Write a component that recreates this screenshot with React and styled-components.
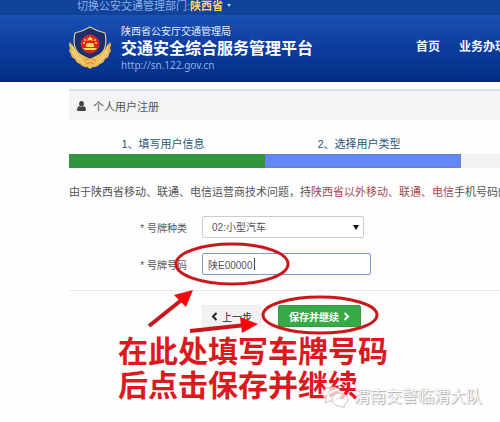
import React from "react";
import styled, { createGlobalStyle } from "styled-components";

const Global = createGlobalStyle`
  *, *::before, *::after { box-sizing: border-box; }
  body {
    margin: 0;
    background: #fefefe;
    color: #555;
    font-family: "Liberation Sans", "Noto Sans CJK SC", sans-serif;
    font-size: 11px;
    overflow: hidden;
  }
  button, input, select { font: inherit; }
`;

const Page = styled.div`
  position: relative;
  overflow: hidden;
  white-space: nowrap;
  min-height: 100vh;
`;

const TopBar = styled.div`
  display: flex;
  align-items: center;
  height: 15px;
  padding: 0 0 4px 77px;
  background: #10429a;
  color: #8fb0e6;
  font-size: 11px;
  line-height: 12px;
`;

const RegionLink = styled.a`
  display: flex;
  align-items: center;
  gap: 4px;
  color: #fbd66c;
  font-size: 11px;
  font-weight: bold;
  text-decoration: none;
  &::after {
    content: "";
    border: 2px solid transparent;
    border-top: 3px solid #b9d2f8;
    border-bottom: 0;
  }
`;

const Header = styled.header`
  display: flex;
  align-items: flex-start;
  height: 67px;
  padding: 10px 0 0 68px;
  background: linear-gradient(#1b51b4, #0c3c9e 50%, #032f86);
  border-bottom: 2px solid #02266f;
  color: #fff;
`;

const Emblem = styled.svg`
  flex: none;
  width: 44px;
  height: 46px;
`;

const Brand = styled.div`
  flex: none;
  display: flex;
  flex-direction: column;
  width: 304px;
  padding-left: 9px;
`;

const Department = styled.span`
  color: #e1edfc;
  font-size: 10px;
  line-height: 14px;
`;

const SiteName = styled.h1`
  margin: 0;
  font-size: 16px;
  line-height: 20px;
  font-weight: bold;
`;

const SiteUrl = styled.span`
  color: #8cb0e8;
  font-family: "Noto Sans", "Open Sans", sans-serif;
  font-size: 10px;
  line-height: 12px;
`;

const Nav = styled.nav`
  display: flex;
  gap: 19px;
  padding-top: 13px;
`;

const NavLink = styled.a`
  color: #f2f7ff;
  font-size: 12px;
  line-height: 18px;
  font-weight: bold;
  text-decoration: none;
`;

const Main = styled.main`
  margin-left: 69px;
  padding-top: 7px;
`;

const PanelTitle = styled.h2`
  display: flex;
  align-items: center;
  gap: 7px;
  height: 31px;
  margin: 0;
  padding-left: 8px;
  background: #f4f3f6;
  border-top: 2px solid #e6dbea;
  font-size: 11px;
  font-weight: normal;
`;

const UserIcon = styled.svg`
  width: 9px;
  height: 10px;
  fill: #444;
`;

const Steps = styled.ol`
  display: flex;
  margin: 14px 0 0;
  padding: 0;
  list-style: none;
  color: #2c5578;
  font-size: 11px;
`;

const Step = styled.li`
  flex: none;
  width: ${(p) => (p.$rest ? "auto" : "196px")};
  flex-grow: ${(p) => (p.$rest ? 1 : 0)};
  text-align: center;
  line-height: 20px;
  padding-right: 8px;
`;

const Progress = styled.div`
  display: flex;
  height: 14px;
  background: #f3f2f4;
`;

const Segment = styled.div`
  flex: none;
  width: 196px;
  background: ${(p) => p.$color};
  border: 1px solid ${(p) => p.$edge};
  border-left: 0;
`;

const Notice = styled.p`
  margin: 14px 0 0;
  font-size: 11px;
  line-height: 20px;
`;

const Warn = styled.span`
  color: #a5484c;
`;

const Form = styled.form`
  display: flex;
  flex-direction: column;
  margin-top: 14px;
`;

const Field = styled.div`
  display: flex;
  align-items: center;
  gap: 15px;
  height: 22px;
  margin-bottom: 15px;
`;

const Label = styled.label`
  width: 118px;
  text-align: right;
  font-size: 10px;
`;

const SelectBox = styled.div`
  display: grid;
  width: 162px;
  align-items: center;
  & > * { grid-area: 1 / 1; }
`;

const Select = styled.select`
  appearance: none;
  width: 100%;
  height: 22px;
  padding: 0 20px 0 9px;
  border: 1px solid #ccc;
  border-radius: 2px;
  background: #fff;
  color: #555;
  font-size: 10px;
`;

const Caret = styled.span`
  justify-self: end;
  margin-right: 5px;
  border: 3px solid transparent;
  border-top: 5px solid #111;
  border-bottom: 0;
  pointer-events: none;
`;

const PlateBox = styled.div`
  display: grid;
  width: 169px;
  align-items: center;
  & > * { grid-area: 1 / 1; }
`;

const Input = styled.input`
  width: 100%;
  height: 22px;
  padding: 0 5px;
  border: 1px solid #7d9cc0;
  border-radius: 2px;
  background: #fff;
  color: #555;
  font-size: 10px;
  outline: none;
`;

const TextCursor = styled.span`
  width: 1px;
  height: 12px;
  margin-left: 52px;
  background: #444;
  pointer-events: none;
`;

const Actions = styled.div`
  display: flex;
  gap: 17px;
  padding: 14px 0 0 133px;
  border-top: 1px solid #e8e8e8;
`;

const Button = styled.button`
  display: flex;
  align-items: center;
  justify-content: center;
  gap: 4px;
  width: ${(p) => (p.$primary ? "83px" : "59px")};
  height: 22px;
  padding: 0;
  border: 1px solid ${(p) => (p.$primary ? "#339c3e" : "#ebebed")};
  border-radius: 2px;
  background: ${(p) => (p.$primary ? "#35aa47" : "#f2f2f4")};
  color: ${(p) => (p.$primary ? "#fff" : "#222")};
  font-size: 10px;
  font-weight: ${(p) => (p.$primary ? "bold" : "normal")};
`;

const Chevron = styled.svg`
  width: 7px;
  height: 9px;
  fill: none;
  stroke: currentColor;
  stroke-width: 2;
`;

const Markup = styled.svg`
  position: absolute;
  left: 0;
  top: 0;
  width: 500px;
  height: 422px;
  pointer-events: none;
`;

const Callout = styled.p`
  position: absolute;
  left: 118px;
  top: 335px;
  margin: 0;
  color: #db1a1f;
  font-size: 30px;
  line-height: 34px;
  font-weight: bold;
`;

const Watermark = styled.div`
  position: absolute;
  left: 322px;
  top: 383px;
  display: flex;
  align-items: center;
  gap: 5px;
  color: #fff;
  font-size: 16px;
  line-height: 28px;
  text-shadow: 0 0 1px #aaa, 1px 1px 1px #aaa;
`;

const ChatIcon = styled.svg`
  width: 27px;
  height: 24px;
  fill: #fff;
  fill-opacity: 0.7;
  stroke: #c8c8c8;
`;

function PoliceEmblem() {
  return (
    <Emblem viewBox="0 0 44 46" aria-hidden="true">
      <path d="M2 17Q0 20 2 23Q0 26 3 29Q3 33 7 34Q8 38 12 39Q15 43 19 42L22 44L25 42Q29 43 32 39Q36 38 37 34Q41 33 41 29Q44 26 42 23Q44 20 42 17L35 27L22 33L9 27Z" fill="#e7b650" />
      <path d="M4 20Q6 31 19 38M4 26Q8 35 19 40M40 20Q38 31 25 38M40 26Q36 35 25 40" fill="none" stroke="#f6d88a" strokeWidth="1.2" />
      <path d="M22 2C17 5 12 7 7 8C5 18 6 26 13 30Q18 33 22 34Q26 33 31 30C38 26 39 18 37 8C32 7 27 5 22 2Z" fill="#1c2f68" stroke="#ddc896" strokeWidth="1.2" />
      <path d="M12 29Q17 33 22 34Q27 33 32 29L29 38L22 42L15 38Z" fill="#eebd56" />
      <circle cx="22" cy="19" r="9" fill="#e61d25" stroke="#b8343e" />
      <path d="M22 11L23 13H25L24 14L25 16L22 15L19 16L20 14L19 13H21Z" fill="#ffdd53" />
      <g fill="#ffdd53">
        <circle cx="17" cy="15" r="1" /><circle cx="27" cy="15" r="1" />
        <circle cx="16" cy="18" r="1" /><circle cx="28" cy="18" r="1" />
        <path d="M18 20L19 18H25L26 20V22H18ZM15 23H29L27 25H17Z" />
      </g>
      <path d="M16 36Q22 31 28 36M18 39Q22 36 26 39" fill="none" stroke="#c57a2c" strokeWidth=".8" />
    </Emblem>
  );
}

export default function App() {
  return (
    <Page>
      <Global />
      <TopBar>
        <span>切换公安交通管理部门:</span>
        <RegionLink href="#region">陕西省</RegionLink>
      </TopBar>
      <Header>
        <PoliceEmblem />
        <Brand>
          <Department>陕西省公安厅交通管理局</Department>
          <SiteName>交通安全综合服务管理平台</SiteName>
          <SiteUrl>http://sn.122.gov.cn</SiteUrl>
        </Brand>
        <Nav>
          <NavLink href="#home">首页</NavLink>
          <NavLink href="#services">业务办理</NavLink>
        </Nav>
      </Header>
      <Main>
        <PanelTitle>
          <UserIcon viewBox="0 0 9 10" aria-hidden="true">
            <ellipse cx="4.5" cy="2.8" rx="2.4" ry="2.8" />
            <path d="M2 5Q4.500 7 7 5Q9 6 9 9Q9 10 8 10H1Q0 10 0 9Q0 6 2 5Z" />
          </UserIcon>
          个人用户注册
        </PanelTitle>
        <Steps>
          <Step>1、填写用户信息</Step>
          <Step>2、选择用户类型</Step>
          <Step $rest />
        </Steps>
        <Progress>
          <Segment $color="#2f963d" $edge="#42864a" />
          <Segment $color="#6088f8" $edge="#7180b8" />
        </Progress>
        <Notice>
          由于陕西省移动、联通、电信运营商技术问题，持<Warn>陕西省以外移动、联通、电信</Warn>手机号码的用
        </Notice>
        <Form onSubmit={(e) => e.preventDefault()}>
          <Field>
            <Label htmlFor="kind">* 号牌种类</Label>
            <SelectBox>
              <Select id="kind" defaultValue="02">
                <option value="02">02:小型汽车</option>
              </Select>
              <Caret />
            </SelectBox>
          </Field>
          <Field>
            <Label htmlFor="plate">* 号牌号码</Label>
            <PlateBox>
              <Input id="plate" defaultValue="陕E00000" />
              <TextCursor />
            </PlateBox>
          </Field>
          <Actions>
            <Button type="button">
              <Chevron viewBox="0 0 7 9" aria-hidden="true"><path d="M5.500 1L2 4.500L5.500 8" /></Chevron>
              上一步
            </Button>
            <Button type="submit" $primary>
              保存并继续
              <Chevron viewBox="0 0 7 9" aria-hidden="true"><path d="M1.500 1L5 4.500L1.500 8" /></Chevron>
            </Button>
          </Actions>
        </Form>
      </Main>
      <Callout>在此处填写车牌号码<br />后点击保存并继续</Callout>
      <Markup viewBox="0 0 500 422" aria-hidden="true">
        <g fill="none" stroke="#c9181c" strokeWidth="3">
          <ellipse cx="232" cy="264" rx="56" ry="20" />
          <ellipse cx="320" cy="315" rx="57" ry="18" />
          <path d="M149 326L184 298M190 331L246 325" strokeWidth="4" />
        </g>
        <path d="M193 290L174 295L186 307ZM258 324L240 317L242 333Z" fill="#f5080b" />
      </Markup>
      <Watermark>
        <ChatIcon viewBox="0 0 27 24" aria-hidden="true">
          <path d="M10 2C4 2 1 5 1 9Q1 12 4 14L3 18L7 16Q11 17 14 15Q19 13 19 9C19 5 15 2 10 2Z" />
          <path d="M18 8C13 8 10 11 10 15C10 19 14 21 18 21L22 23V20Q26 18 26 15C26 11 22 8 18 8Z" />
          <path d="M7 6V8M13 6V8M15 13V14M21 13V14" />
        </ChatIcon>
        <span>渭南交警临渭大队</span>
      </Watermark>
    </Page>
  );
}
